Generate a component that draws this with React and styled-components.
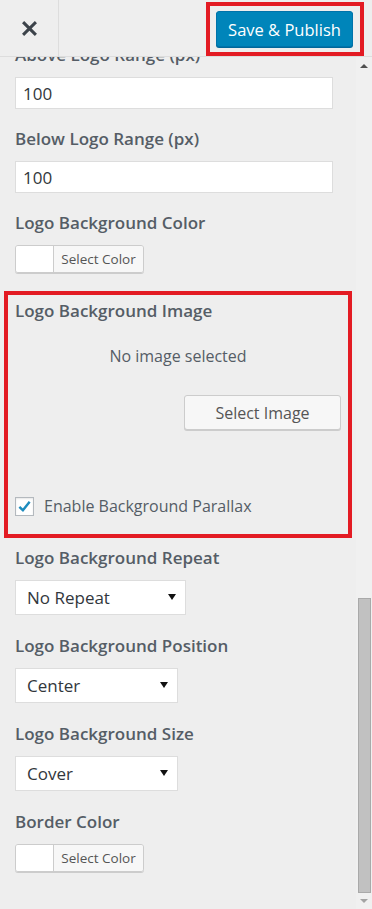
import React from 'react';
import styled, { createGlobalStyle } from 'styled-components';

const GlobalStyle = createGlobalStyle`
  html, body {
    margin: 0;
    padding: 0;
    background: #eeeeee;
  }
  body {
    font-family: 'Open Sans', 'Noto Sans', sans-serif;
    color: #555d66;
  }
  * {
    box-sizing: border-box;
  }
`;

const Page = styled.div`
  width: 372px;
  height: 909px;
  display: flex;
  flex-direction: column;
  background: #eeeeee;
  overflow: hidden;
`;

const Header = styled.div`
  height: 57px;
  flex: none;
  display: flex;
  justify-content: space-between;
  align-items: flex-start;
  border-bottom: 1px solid #dddddd;
  background: #eeeeee;
  position: relative;
  z-index: 2;
`;

const CloseBtn = styled.div`
  width: 59px;
  height: 56px;
  display: flex;
  align-items: center;
  justify-content: center;
  border-right: 1px solid #dddddd;

  svg {
    width: 15px;
    height: 15px;
  }
`;

// red annotation frame drawn round a part of the screen
const Highlight = styled.div`
  border: 4px solid #e31b23;
  padding: ${props => props.pad || '0'};
  margin: ${props => props.outer || '0'};
`;

const PrimaryButton = styled.button`
  width: 137px;
  height: 36px;
  display: block;
  background: #0085ba;
  border: 1px solid #0073aa;
  border-radius: 3px;
  box-shadow: 0 1px 0 #006799;
  color: #ffffff;
  font-family: 'Open Sans', sans-serif;
  font-size: 16.5px;
  padding: 0;
  cursor: pointer;
`;

const Body = styled.div`
  flex: 1;
  display: flex;
  min-height: 0;
`;

const Panel = styled.div`
  flex: 1;
  padding: 0 12px 0 15px;
  overflow: hidden;
`;

// the panel is scrolled a little, so the first label sits under the header
const Scrolled = styled.div`
  margin-top: -14px;
`;

const Control = styled.div`
  margin-bottom: ${props => (props.loose ? '19px' : '18px')};
`;

const Label = styled.div`
  font-size: 17px;
  font-weight: 600;
  line-height: 24px;
  color: #555d66;
  margin-bottom: 10px;
`;

const TextInput = styled.div`
  width: 318px;
  height: 32px;
  background: #ffffff;
  border: 1px solid #dddddd;
  padding: 0 7px;
  display: flex;
  align-items: center;
  font-size: 17px;
  color: #32373c;
`;

const ColorPicker = styled.div`
  display: flex;
  width: 129px;
  height: 28px;
  border: 1px solid #cccccc;
  border-radius: 3px;
  box-shadow: 0 1px 0 #cccccc;
  overflow: hidden;
`;

const Swatch = styled.div`
  width: 38px;
  background: #ffffff;
  border-right: 1px solid #cccccc;
`;

const SwatchText = styled.div`
  flex: 1;
  background: #f7f7f7;
  display: flex;
  align-items: center;
  justify-content: center;
  font-size: 13.5px;
  color: #555555;
`;

const Placeholder = styled.div`
  text-align: center;
  font-size: 16px;
  line-height: 22px;
  color: #555d66;
  margin-top: 22px;
`;

const ButtonRow = styled.div`
  display: flex;
  justify-content: flex-end;
  margin-top: 28px;
`;

const SecondaryButton = styled.button`
  width: 157px;
  height: 35px;
  background: #f7f7f7;
  border: 1px solid #cccccc;
  border-radius: 3px;
  box-shadow: 0 1px 0 #cccccc;
  font-family: 'Open Sans', sans-serif;
  font-size: 16px;
  color: #555555;
  padding: 0;
`;

const CheckRow = styled.label`
  display: flex;
  align-items: center;
  gap: 10px;
  margin-top: 65px;
  font-size: 16px;
  color: #555d66;
`;

const CheckBox = styled.span`
  width: 19px;
  height: 19px;
  background: #ffffff;
  border: 1px solid #b4b9be;
  box-shadow: inset 0 1px 2px rgba(0, 0, 0, 0.1);
  display: flex;
  align-items: center;
  justify-content: center;

  svg {
    width: 15px;
    height: 15px;
  }
`;

const Select = styled.div`
  width: ${props => props.width}px;
  height: 35px;
  background: #ffffff;
  border: 1px solid #dddddd;
  display: flex;
  align-items: center;
  justify-content: space-between;
  padding: 0 9px 0 11px;
  font-size: 17px;
  color: #32373c;
`;

const Caret = styled.span`
  width: 0;
  height: 0;
  border-left: 4px solid transparent;
  border-right: 4px solid transparent;
  border-top: 6px solid #111111;
  margin-top: -2px;
`;

const Scrollbar = styled.div`
  width: 16px;
  flex: none;
  display: flex;
  flex-direction: column;
  align-items: center;
  background: #f0f0f0;
`;

const Arrow = styled.div`
  height: ${props => props.h}px;
  flex: none;
  display: flex;
  align-items: center;
  justify-content: center;
  width: 100%;

  &::before {
    content: '';
    width: 0;
    height: 0;
    border-left: 4px solid transparent;
    border-right: 4px solid transparent;
    ${props =>
      props.down
        ? `border-top: 4px solid ${props.color};`
        : `border-bottom: 4px solid ${props.color};`}
  }
`;

const Gap = styled.div`
  height: ${props => props.h}px;
  flex: none;
`;

const Thumb = styled.div`
  width: 13px;
  height: ${props => props.h}px;
  flex: none;
  margin-left: 1px;
  background: #c1c1c1;
  border: 1px solid #a9a9a9;
`;

const CloseIcon = () => (
  <svg viewBox="0 0 14 14">
    <path d="M2 2 L12 12 M12 2 L2 12" stroke="#3c434a" strokeWidth="2.8" strokeLinecap="square" />
  </svg>
);

const CheckIcon = () => (
  <svg viewBox="0 0 16 16">
    <path d="M2.5 8.5 L6.3 12 L13.5 3" fill="none" stroke="#1e8cbe" strokeWidth="2.6" />
  </svg>
);

const ColorControl = ({ label }) => (
  <Control>
    <Label>{label}</Label>
    <ColorPicker>
      <Swatch />
      <SwatchText>Select Color</SwatchText>
    </ColorPicker>
  </Control>
);

const SelectControl = ({ label, value, width }) => (
  <Control loose>
    <Label>{label}</Label>
    <Select width={width}>
      <span>{value}</span>
      <Caret />
    </Select>
  </Control>
);

export default function App() {
  return (
    <Page>
      <GlobalStyle />
      <Header>
        <CloseBtn>
          <CloseIcon />
        </CloseBtn>
        <Highlight pad="5px 7px 5px 6px" outer="2px 8px 0 0">
          <PrimaryButton>Save &amp; Publish</PrimaryButton>
        </Highlight>
      </Header>
      <Body>
        <Panel>
          <Scrolled>
            <Control>
              <Label>Above Logo Range (px)</Label>
              <TextInput>100</TextInput>
            </Control>
            <Control>
              <Label>Below Logo Range (px)</Label>
              <TextInput>100</TextInput>
            </Control>
            <ColorControl label="Logo Background Color" />

            <Highlight pad="4px 7px 17px 7px" outer="0 -8px 8px -11px">
              <Label>Logo Background Image</Label>
              <Placeholder>No image selected</Placeholder>
              <ButtonRow>
                <SecondaryButton>Select Image</SecondaryButton>
              </ButtonRow>
              <CheckRow>
                <CheckBox>
                  <CheckIcon />
                </CheckBox>
                Enable Background Parallax
              </CheckRow>
            </Highlight>

            <SelectControl label="Logo Background Repeat" value="No Repeat" width={171} />
            <SelectControl label="Logo Background Position" value="Center" width={163} />
            <SelectControl label="Logo Background Size" value="Cover" width={163} />
            <ColorControl label="Border Color" />
          </Scrolled>
        </Panel>
        <Scrollbar>
          <Arrow h={18} color="#505050" />
          <Gap h={523} />
          <Thumb h={295} />
          <Arrow h={16} down color="#a3a3a3" />
        </Scrollbar>
      </Body>
    </Page>
  );
}
